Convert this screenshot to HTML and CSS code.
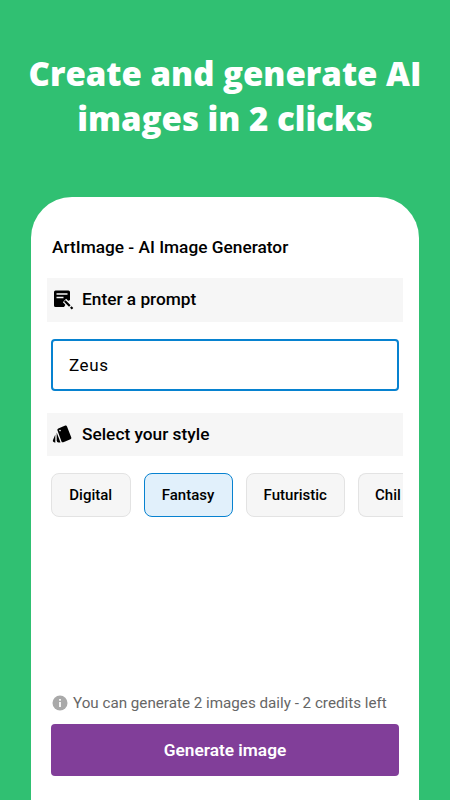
FILE: index.html
```html
<!DOCTYPE html>
<html lang="en">
<head>
<meta charset="utf-8">
<title>ArtImage - AI Image Generator</title>
<link rel="stylesheet" href="styles.css">
</head>
<body>
<h1 class="headline"><span class="line line-one">Create and generate AI</span><span class="line line-two">images in 2 clicks</span></h1>
<main class="phone">
  <h2 class="app-title">ArtImage - AI Image Generator</h2>
  <div class="section">
    <svg class="section-icon" viewBox="0 0 22 22">
      <path d="M3.500 1.500h13A1.500 1.500 0 0 1 18 3v8l-2 1-4 6H3.500A1.500 1.500 0 0 1 2 16.500V3A1.500 1.500 0 0 1 3.500 1.500z"/>
      <path d="M4.500 5h11M4.500 8.500h7" stroke="#f6f6f6" stroke-width="1.600"/>
      <path d="M12.500 11.500l8.500 8.500" stroke="#f6f6f6" stroke-width="4.600"/>
      <path d="M12.800 12l5 5M18.800 18l1.700 1.700" fill="none" stroke="#000" stroke-width="2.200"/>
    </svg>
    <span>Enter a prompt</span>
  </div>
  <div class="prompt">Zeus</div>
  <div class="section section-style">
    <svg class="section-icon" viewBox="0 0 22 22">
      <path d="M6.300 4.500l7-2.900q1.200-.4 1.700.8l4.300 11q.4 1.300-.8 1.800l-7.200 3q-1.300.5-1.800-.8L5.400 6.300q-.4-1.300.9-1.800z"/>
      <path d="M4.700 8.500v8q0 2 1.800 2h2z"/>
      <path d="M3.300 10.500L.9 16.300q-.4 1.200.7 1.700l1.700.8z"/>
      <circle cx="8" cy="6.600" r=".8" fill="#f6f6f6"/>
    </svg>
    <span>Select your style</span>
  </div>
  <div class="chips">
    <div class="chip digital">Digital</div>
    <div class="chip fantasy selected">Fantasy</div>
    <div class="chip futuristic">Futuristic</div>
    <div class="chip partial">Chil</div>
  </div>
  <div class="credits">
    <svg class="info" viewBox="0 0 16 16"><circle cx="8" cy="8" r="7.500" fill="#a9a9a9"/><path d="M8 4v1.800M8 7v5" stroke="#fff" stroke-width="1.700"/></svg>
    <span>You can generate 2 images daily - 2 credits left</span>
  </div>
  <div class="generate">Generate image</div>
</main>
</body>
</html>
```
FILE: styles.css
```css
* { box-sizing: border-box; }
body {
  margin: 0;
  width: 450px;
  height: 800px;
  overflow: hidden;
  display: flex;
  flex-direction: column;
  background: #30c072;
  font-family: Roboto, "Liberation Sans", sans-serif;
  color: #000;
}
.headline {
  margin: 0;
  height: 197px;
  padding-top: 51px;
  color: #fff;
  font: 800 33px/45px "Open Sans", "Noto Sans", sans-serif;
  text-align: center;
}
.line { display: block; white-space: nowrap; }
.phone {
  flex: 1;
  display: flex;
  flex-direction: column;
  width: 388px;
  margin-left: 31px;
  padding: 0 16px 24px;
  border-radius: 41px 41px 0 0;
  background: #fff;
}
.app-title {
  margin: 40px 0 0 5px;
  font-size: 17.3px;
  line-height: 20px;
  font-weight: 500;
  white-space: nowrap;
}
.section {
  display: flex;
  align-items: center;
  gap: 8px;
  height: 44px;
  margin-top: 21px;
  padding: 0 0 2px 5px;
  background: #f6f6f6;
  font-size: 17.3px;
  font-weight: 500;
  white-space: nowrap;
}
.section-icon { width: 22px; height: 22px; margin-top: 2px; }
.prompt {
  display: flex;
  align-items: center;
  height: 52px;
  margin: 17px 4px 0;
  padding-left: 16px;
  border: 2px solid #0782d0;
  border-radius: 4px;
  font-size: 17px;
  letter-spacing: .6px;
}
.section-style { height: 43px; margin-top: 22px; padding-bottom: 1px; }
.chips {
  display: flex;
  gap: 13px;
  margin: 17px 0 0 4px;
  overflow: hidden;
}
.chip {
  flex: none;
  height: 44px;
  border: 1px solid #e3e3e3;
  border-radius: 8px;
  background: #f6f6f6;
  font-size: 15px;
  line-height: 43px;
  font-weight: 500;
  text-align: center;
}
.digital { width: 79.500px; }
.fantasy { width: 89px; }
.futuristic { width: 99.500px; }
.partial {
  flex: 1;
  padding-left: 16px;
  border-right: 0;
  border-radius: 8px 0 0 8px;
  text-align: left;
}
.selected { border-color: #0782d0; background: #e1f0fb; }
.credits {
  display: flex;
  align-items: center;
  gap: 5px;
  height: 20px;
  margin: auto 0 11px 5px;
  color: #666;
  font-size: 15.2px;
  white-space: nowrap;
}
.info { width: 16px; height: 16px; }
.generate {
  height: 52px;
  margin: 0 4px;
  border-radius: 4px;
  background: #813e99;
  color: #fff;
  font-size: 17.3px;
  line-height: 52px;
  font-weight: 600;
  text-align: center;
}
```
